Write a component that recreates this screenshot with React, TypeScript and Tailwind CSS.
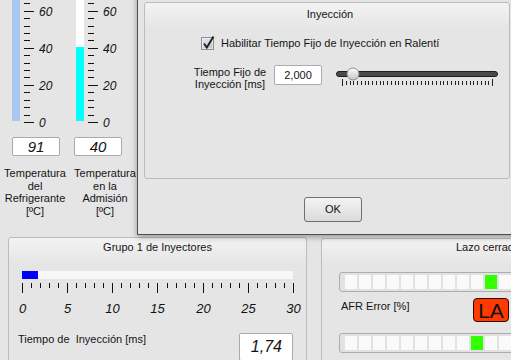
import React from 'react';

// escala vertical de los termómetros (0 abajo, marcas cada 4 unidades)
function ThermoScale() {
  const items: React.ReactNode[] = [];
  for (let v = 0; v <= 100; v += 4) {
    const y = Math.round(122 - v * 1.855) + 0.5;
    const major = v % 20 === 0;
    items.push(<line key={'t' + v} x1={4} x2={major ? 14 : 10} y1={y} y2={y} stroke="#111" strokeWidth={1} />);
    if (major && v <= 60) {
      items.push(
        <text key={'l' + v} x={19} y={y + 4.5} fontSize={12} fontStyle="italic" fill="#111" fontFamily="'Liberation Sans', Arial, sans-serif">
          {v}
        </text>
      );
    }
  }
  return (
    <svg width={40} height={126} className="overflow-visible">
      {items}
    </svg>
  );
}

interface GaugeProps {
  value: number;
  readout: string;
  lines: string[];
  barOffset: string;
  boxOffset: string;
  emptyClass: string;
  fillClass: string;
}

function Gauge({ value, readout, lines, barOffset, boxOffset, emptyClass, fillClass }: GaugeProps) {
  const fill = Math.min(121, value * 1.855);
  return (
    <div className="flex w-[70px] shrink-0 flex-col">
      <div className={`flex h-[126px] ${barOffset}`}>
        <div className={`flex h-[121px] w-[8px] flex-col ${emptyClass}`}>
          <div className={`mt-auto ${fillClass}`} style={{ height: fill }} />
        </div>
        <ThermoScale />
      </div>
      <div className={`mt-[11px] flex h-[19px] w-[48px] items-center justify-center rounded-[2px] border border-[#a9abb0] bg-white text-[15px] italic leading-none ${boxOffset}`}>
        {readout}
      </div>
      <div className="mt-[11px] text-center leading-[12.5px]">
        {lines.map((l) => (
          <div key={l}>{l}</div>
        ))}
      </div>
    </div>
  );
}

function InjectorScale() {
  const items: React.ReactNode[] = [];
  for (let i = 0; i <= 30; i++) {
    const x = Math.round(13 + i * 9.033) + 0.5;
    const major = i % 5 === 0;
    items.push(<line key={'t' + i} x1={x} x2={x} y1={0} y2={major ? 10 : 5} stroke="#111" strokeWidth={1} />);
    if (major) {
      items.push(
        <text key={'l' + i} x={x} y={30} fontSize={13} fontStyle="italic" textAnchor="middle" fill="#111" fontFamily="'Liberation Sans', Arial, sans-serif">
          {i}
        </text>
      );
    }
  }
  return (
    <svg width={297} height={34} className="mt-[4px] block overflow-visible">
      {items}
    </svg>
  );
}

function LedBar({ lit }: { lit: number }) {
  const cells = Array.from({ length: 21 }, (_, i) => i);
  return (
    <div className="ml-[17px] flex h-[20px] w-max gap-[2px] rounded-[3px] border border-[#adadad] bg-[#e2e2e2] py-[2px] pl-[5px] pr-[5px]">
      {cells.map((i) => (
        <div key={i} className={`h-[14px] w-[12px] ${i === lit ? 'bg-[#33ff00]' : 'bg-[#fafafa]'}`} />
      ))}
    </div>
  );
}

function SliderDrawing() {
  const ticks: React.ReactNode[] = [];
  for (let i = 0; i <= 40; i++) {
    const x = Math.round(6 + i * 3.75) + 0.5;
    const end = i === 0 || i === 40;
    ticks.push(<line key={i} x1={x} x2={x} y1={end ? 14 : 16} y2={end ? 21 : 20} stroke="#222" strokeWidth={1} />);
  }
  return (
    <svg width={165} height={24} className="ml-[14px] block">
      <defs>
        <linearGradient id="thumb" x1="0" y1="0" x2="0" y2="1">
          <stop offset="0" stopColor="#ffffff" />
          <stop offset="1" stopColor="#c4c4c4" />
        </linearGradient>
      </defs>
      <rect x={0.5} y={6.5} width={161} height={5} rx={2.5} fill="#4a4a4a" stroke="#1f1f1f" />
      {ticks}
      <circle cx={17} cy={9} r={6} fill="url(#thumb)" stroke="#8c8c8c" />
    </svg>
  );
}

function CheckDrawing() {
  return (
    <svg width={15} height={16} className="block shrink-0">
      <defs>
        <linearGradient id="cb" x1="0" y1="0" x2="1" y2="1">
          <stop offset="0" stopColor="#e9edf2" />
          <stop offset="1" stopColor="#b4bfcc" />
        </linearGradient>
      </defs>
      <rect x={0.5} y={2.5} width={12} height={12} fill="url(#cb)" stroke="#8e8f8f" />
      <rect x={1.5} y={3.5} width={10} height={10} fill="none" stroke="#f4f6f8" strokeOpacity={0.6} />
      <path d="M3 8.5 L5.8 12.5 L12.5 1.5" fill="none" stroke="#1c1c1c" strokeWidth={1.8} />
    </svg>
  );
}

function FixedTimeDialog() {
  return (
    <div className="absolute left-[137px] top-[-40px] flex h-[275px] w-[380px] flex-col justify-end border border-[#4e4e4e] bg-[#e5e5e5] px-[6px] pb-[12px] shadow-[0_2px_6px_rgba(0,0,0,0.35)]">
      <div className="h-[177px] rounded-[3px] border border-[#bcbcbc] bg-[linear-gradient(to_bottom,#f3f3f3,#e5e5e5_26px)]">
        <div className="pl-[6px] pt-[4px] text-center leading-[14px]">Inyección</div>
        <div className="mt-[14px] flex h-[16px] items-center pl-[56px]">
          <CheckDrawing />
          <span className="ml-[5px]">Habilitar Tiempo Fijo de Inyección en Ralentí</span>
        </div>
        <div className="mt-[14px] flex items-start">
          <div className="ml-[46px] mt-[2px] w-[78px] whitespace-nowrap text-center leading-[11.5px]">
            <div>Tiempo Fijo de</div>
            <div>Inyección [ms]</div>
          </div>
          <div className="ml-[5px] flex h-[20px] w-[48px] items-center justify-center rounded-[2px] border border-[#a9abb0] bg-white">
            2,000
          </div>
          <SliderDrawing />
        </div>
      </div>
      <button className="ml-[160px] mt-[18px] h-[25px] w-[58px] rounded-[3px] border border-[#707070] bg-[linear-gradient(to_bottom,#f4f4f4,#dadada)] text-[11px] text-[#111]">
        OK
      </button>
    </div>
  );
}

export default function App() {
  return (
    <div className="relative h-[360px] w-[511px] overflow-hidden bg-[#e5e5e5] font-['Liberation_Sans',Arial,sans-serif] text-[11px] text-[#141414]">
      <div className="flex h-[237px]">
        <Gauge
          value={91}
          readout="91"
          lines={['Temperatura', 'del', 'Refrigerante', '[ºC]']}
          barOffset="ml-[12px]"
          boxOffset="ml-[12px]"
          emptyClass="bg-[#a8c9ef]"
          fillClass="bg-[#a8c9ef]"
        />
        <Gauge
          value={40}
          readout="40"
          lines={['Temperatura', 'en la', 'Admisión', '[ºC]']}
          barOffset="ml-[6px]"
          boxOffset="ml-[4px]"
          emptyClass="bg-white"
          fillClass="bg-[#00ffff]"
        />
      </div>

      <div className="flex gap-[14px] pl-[8px]">
        <div className="h-[130px] w-[299px] shrink-0 rounded-[3px] border border-[#bcbcbc] bg-[linear-gradient(to_bottom,#f3f3f3,#e5e5e5_26px)]">
          <div className="pt-[2px] text-center leading-[14px]">Grupo 1 de Inyectores</div>
          <div className="mx-[13px] mt-[17px] h-[8px] bg-[#f7f7f7]">
            <div className="h-full w-[16px] bg-[#0000ff]" />
          </div>
          <InjectorScale />
          <div className="mt-[15px] flex items-start pl-[9px]">
            <span className="whitespace-pre leading-[14px]">Tiempo de  Inyección [ms]</span>
            <div className="ml-auto mr-[13px] mt-[1px] h-[28px] w-[54px] rounded-[2px] border border-[#a9abb0] bg-white pr-[10px] pt-[4px] text-right text-[16px] italic leading-[18px]">
              1,74
            </div>
          </div>
        </div>

        <div className="mt-[1px] h-[130px] w-[334px] shrink-0 rounded-[3px] border border-[#bcbcbc] bg-[linear-gradient(to_bottom,#f3f3f3,#e5e5e5_26px)]">
          <div className="pt-[1px] text-center leading-[14px]">Lazo cerrado</div>
          <div className="mt-[18px]">
            <LedBar lit={10} />
          </div>
          <div className="mt-[6px] flex items-start">
            <span className="ml-[19px] mt-[1px] w-[132px] leading-[14px]">AFR Error [%]</span>
            <div className="flex h-[24px] w-[36px] items-center justify-center rounded-[4px] border-[1.5px] border-[#2a0800] bg-[#ff3a00] text-[21px] leading-none text-[#111]">
              LA
            </div>
          </div>
          <div className="mt-[11px]">
            <LedBar lit={9} />
          </div>
        </div>
      </div>

      <FixedTimeDialog />
    </div>
  );
}
